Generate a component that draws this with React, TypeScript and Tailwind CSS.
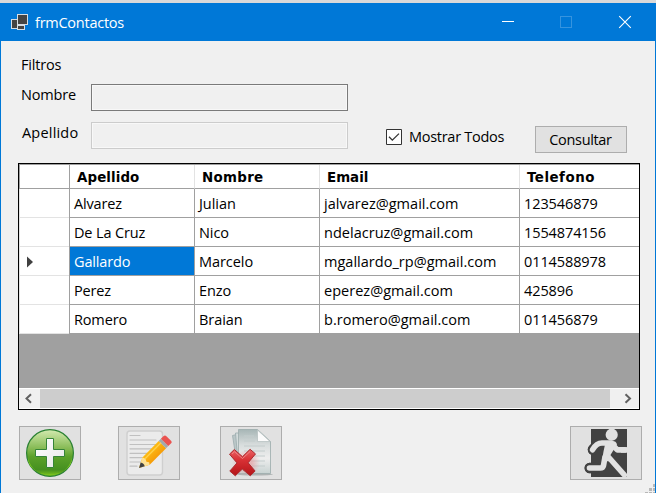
import React from "react";

const rows = [
  ["Alvarez", "Julian", "jalvarez@gmail.com", "123546879"],
  ["De La Cruz", "Nico", "ndelacruz@gmail.com", "1554874156"],
  ["Gallardo", "Marcelo", "mgallardo_rp@gmail.com", "0114588978"],
  ["Perez", "Enzo", "eperez@gmail.com", "425896"],
  ["Romero", "Braian", "b.romero@gmail.com", "011456879"],
];
const headers = ["Apellido", "Nombre", "Email", "Telefono"];
const columns = "grid grid-cols-[50px_125px_125px_200px_120px]";
const tracking = ["tracking-[-0.15px]", "tracking-[-0.05px]", "tracking-[0.02px]", "tracking-[-0.1px]"];
const headerTracking = ["tracking-[0.1px]", "tracking-[0.3px]", "tracking-[0px]", "tracking-[0.5px]"];

function TitleBar() {
  return (
    <header className="flex h-[38px] shrink-0 items-center bg-[#0078d7] pl-[11px] text-white">
      <svg width="18" height="17" viewBox="0 0 18 17">
        <rect x="0.5" y="5.5" width="7" height="9" fill="#444" stroke="#d5dde4" />
        <rect x="6.5" y="0.5" width="10" height="10" fill="#444" stroke="#d5dde4" />
        <rect x="6.5" y="11.5" width="7" height="4" fill="#444" stroke="#d5dde4" />
      </svg>
      <h1 className="ml-[6px] mt-[1px] flex-1 text-[14.5px] leading-5 tracking-[-0.25px]">frmContactos</h1>
      <svg width="156" height="38" viewBox="0 0 156 38" fill="none">
        <path d="M2 18.5h12" stroke="#fff" />
        <rect x="60.5" y="13.5" width="11" height="11" stroke="#3694df" />
        <path d="M119.2 13.2l11.6 11.6M130.8 13.2l-11.6 11.6" stroke="#fff" strokeWidth="1.1" />
      </svg>
    </header>
  );
}

function AddIcon() {
  return (
    <svg width="60" height="52" viewBox="0 0 60 52">
      <defs>
        <linearGradient id="add" x1="0" y1="0" x2="0" y2="1">
          <stop offset="0" stopColor="#d3eaaf" />
          <stop offset=".42" stopColor="#82b850" />
          <stop offset=".58" stopColor="#5ba129" />
          <stop offset=".86" stopColor="#459020" />
          <stop offset="1" stopColor="#82cb1c" />
        </linearGradient>
        <linearGradient id="plus" x1="0" y1="0" x2="1" y2="1">
          <stop offset="0" stopColor="#fff" />
          <stop offset="1" stopColor="#e6e6e6" />
        </linearGradient>
      </defs>
      <circle cx="30" cy="26" r="23.4" fill="url(#add)" stroke="#2b8134" strokeWidth="1.2" />
      <path d="M8 31C11 43 20 48 30 48s19-5 22-17c0 10-10 16.5-22 16.5S8 41 8 31z" fill="#81c91e" />
      <path d="M26.5 11.5h7v11h11v7h-11v11h-7v-11h-11v-7h11z" fill="url(#plus)" stroke="#358437" />
    </svg>
  );
}

function EditIcon() {
  return (
    <svg width="60" height="52" viewBox="0 0 60 52">
      <defs>
        <linearGradient id="pencil" x1="0" y1="0" x2="1" y2="1">
          <stop offset=".3" stopColor="#ffc216" />
          <stop offset=".65" stopColor="#f59b08" />
        </linearGradient>
      </defs>
      <rect x="8" y="4" width="35.5" height="44" rx="3" fill="#ebebeb" stroke="#cfcfcf" strokeWidth="1.4" />
      <path d="M11 8.5h10M11 13h26M11 17.5h28M11 21.8h28M11 26.3h26M11 30.7h22M11 35h17M11 39.2h7" stroke="#c0c0c0" strokeWidth="1.2" strokeLinecap="round" />
      <path d="M20 41l3.4-10.6L39.7 14l7.4 7.3-16.4 16.5z" fill="url(#pencil)" />
      <path d="M20 41l3.4-10.6 3 1.2 1 3.2 2.7.5.6 2.5z" fill="#ffe294" />
      <path d="M20 41l1.7-5.4c2 .2 3.5 1.7 4 3.7z" fill="#424242" />
      <path d="M39.7 14l2.2-2.2 7.4 7.3-2.2 2.2z" fill="#a2a9ac" />
      <path d="M41.9 11.8l2.5-2.5c1-1 2-1 3-.1l4.6 4.5c1 .9.9 2-.1 2.9l-2.6 2.5z" fill="#ea5350" />
      <path d="M25.8 32L42 15.8" stroke="#ffd14b" strokeWidth="1.3" />
    </svg>
  );
}

function DeleteIcon() {
  return (
    <svg width="60" height="52" viewBox="0 0 60 52">
      <defs>
        <linearGradient id="sheet" x1="0" y1="0" x2="0" y2="1">
          <stop offset="0" stopColor="#a7b6b6" />
          <stop offset=".35" stopColor="#d8dddd" />
          <stop offset=".65" stopColor="#eee" />
          <stop offset="1" stopColor="#c8d3d2" />
        </linearGradient>
        <linearGradient id="remove" x1="0" y1="0" x2="0" y2="1">
          <stop offset="0" stopColor="#e96365" />
          <stop offset=".4" stopColor="#d93135" />
          <stop offset="1" stopColor="#b31418" />
        </linearGradient>
        <radialGradient id="glow">
          <stop offset=".4" stopColor="#e69b9d" />
          <stop offset="1" stopColor="#e69b9d" stopOpacity="0" />
        </radialGradient>
      </defs>
      <ellipse cx="34" cy="47.3" rx="18" ry="1.2" fill="#aeb3b3" />
      <path d="M11.5 8.5l4-1 2 20h-3z" fill="#bbc7c8" stroke="#9aabad" strokeWidth=".8" />
      <path d="M14.5 6h4v23h-2z" fill="#d4dcdc" stroke="#9aabad" strokeWidth=".8" />
      <path d="M17.5 2.5h19l13 12v32h-32z" fill="url(#sheet)" stroke="#9babab" strokeWidth=".8" />
      <path d="M36.5 3v11.5H49z" fill="#fbfbfb" stroke="#b8c1c1" strokeWidth=".8" />
      <path d="M23 9h10M23 14h11M23 19h21M23 24h21M28 29h16M30 34h14M31 39h13" stroke="#c3cccc" />
      <ellipse cx="25" cy="36" rx="14" ry="13" fill="url(#glow)" opacity=".65" />
      <path d="M8.5 27.2L13.3 22.5l8.2 7.2 7.6-7.4 5.4 4.6-7.4 8.9 7 8.2-4.8 4.8-8-6.7-7 6.7-5.500-4.700L16 35.9z" fill="url(#remove)" stroke="#a92c30" strokeLinejoin="round" />
      <path d="M11 27l2.5-2.3 8 6.8 7.5-7" fill="none" stroke="#f19092" strokeWidth=".8" />
    </svg>
  );
}

function ExitIcon() {
  return (
    <svg width="70" height="52" viewBox="0 0 70 52">
      <path d="M20 2h36v48H20z" fill="#424242" />
      <path d="M22 22.5L26 18M18.8 41H24" stroke="#424242" strokeWidth="10.5" strokeLinecap="round" />
      <path d="M14.5 27.8h5.5v7.2h-5.5z" fill="#e1e1e1" />
      <circle cx="18.8" cy="41" r="5.25" fill="#424242" />
      <circle cx="22" cy="22.7" r="5.25" fill="#424242" />
      <circle cx="40.7" cy="7.7" r="6.1" fill="#e1e1e1" />
      <g fill="none" stroke="#e1e1e1" strokeWidth="5.6" strokeLinecap="round" strokeLinejoin="round">
        <path d="M21.6 22.7C24 18.5 27 16 31 16h9" />
        <path d="M41 17.5l5.5 5.4H53.5" />
        <path d="M34 30l-1.500 8.500c-.5 2-1.500 2.500-3 2.500H18.500" />
        <path d="M37 29.5L53.4 48" />
      </g>
      <path d="M33 14h8c3 0 4.5 1 5 3.5l-7.5 12-1 5-6.3-2 1.3-8 1.5-7z" fill="#e1e1e1" />
      <path d="M50 20.1h6v5.6h-6z" fill="#e1e1e1" />
    </svg>
  );
}

function IconButton({ label, className, children }: { label: string; className: string; children: React.ReactNode }) {
  return (
    <button aria-label={label} className={`h-[54px] shrink-0 border border-[#adadad] bg-[#e1e1e1] ${className}`}>
      {children}
    </button>
  );
}

function ContactsGrid() {
  return (
    <section className="ml-[17px] mt-[10px] flex h-[247px] w-[622px] shrink-0 flex-col border border-black bg-[#a0a0a0] text-[14.5px] leading-5">
      <div className={`${columns} h-[25px] shrink-0 border-t border-[#a0a0a0]`}>
        <div className="h-6 border-b border-l border-b-[#a0a0a0] border-l-[#a0a0a0] bg-white" />
        {headers.map((h, i) => (
          <div key={h} className={`flex h-6 items-center border-b border-b-[#a0a0a0] border-l bg-white pl-[7px] pt-[2px] font-['DejaVu_Sans',sans-serif] text-[13.4px] font-bold ${headerTracking[i]} ${i === 0 ? "border-l-[#a0a0a0]" : "border-l-[#e3e3e3]"}`}>
            {h}
          </div>
        ))}
      </div>
      {rows.map((row, i) => (
        <div key={row[0]} className={`${columns} h-[29px] shrink-0`}>
          <div className="flex items-center border-b border-l border-b-[#e3e3e3] border-l-[#e3e3e3] bg-white pl-[6px]">
            {i === 2 && (
              <svg width="8" height="12" viewBox="0 0 8 12" className="mt-[2px]">
                <path d="M1 .5L7 6 1 11.5z" fill="#404040" />
              </svg>
            )}
          </div>
          {row.map((value, j) => (
            <div key={j} className={`flex items-center whitespace-nowrap border-b border-l border-[#a0a0a0] pl-1 pt-[1px] ${tracking[j]} ${i === 2 && j === 0 ? "bg-[#0078d7] text-white" : "bg-white"}`}>
              {value}
            </div>
          ))}
        </div>
      ))}
      <div className="mt-auto flex h-[21px] shrink-0 border-y border-white bg-[#f0f0f0]">
        <svg width="21" height="19" viewBox="0 0 21 19" fill="none" stroke="#606060" strokeWidth="2">
          <path d="M12 5.2L7.5 9.5l4.5 4.3" />
        </svg>
        <div className="w-[570px] bg-[#cdcdcd]" />
        <svg width="29" height="19" viewBox="0 0 29 19" fill="none" stroke="#606060" strokeWidth="2">
          <path d="M15.5 5.2l4.5 4.3-4.5 4.3" />
        </svg>
      </div>
    </section>
  );
}

export default function App() {
  return (
    <main className="flex h-[493px] w-[656px] flex-col overflow-hidden bg-[#d9d9d9] pt-[3px] font-['Open_Sans','Noto_Sans',sans-serif] text-[14.5px] leading-5 text-black">
      <TitleBar />
      <div className="relative flex flex-1 flex-col border-x border-[#0078d7] bg-[#f0f0f0]">
        <div className="ml-5 mt-[14px] h-5 tracking-[-0.2px]">Filtros</div>
        <div className="mt-[9px] flex h-[27px] items-start pl-5">
          <label htmlFor="nombre" className="w-[70px] pt-[1px] tracking-[-0.15px]">Nombre</label>
          <input id="nombre" className="h-[27px] w-[257px] border border-[#7a7a7a] bg-[#f0f0f0] shadow-[inset_0_0_0_1px_#f8f8f8]" />
        </div>
        <div className="mt-[11px] flex h-[31px] items-start pl-[21px]">
          <label htmlFor="apellido" className="w-[69px] pt-[1px] tracking-[0.2px]">Apellido</label>
          <input id="apellido" disabled className="h-[27px] w-[257px] border border-[#cccccc] bg-[#f0f0f0] shadow-[inset_0_0_0_1px_#f8f8f8]" />
          <label className="ml-[38px] flex w-[149px] items-center pt-[5px] tracking-[-0.28px]">
            <svg width="16" height="16" viewBox="0 0 16 16" className="mr-[7px]">
              <path d="M.5.5h15v15H.5z" fill="#fff" stroke="#333" />
              <path d="M3 7.8l3.3 3.3L13 4.6" fill="none" stroke="#333" strokeWidth="1.3" />
            </svg>
            Mostrar Todos
          </label>
          <button className="mt-1 h-[27px] w-[92px] border border-[#adadad] bg-[#e1e1e1] pr-[1px] tracking-[-0.33px]">Consultar</button>
        </div>
        <ContactsGrid />
        <footer className="mt-4 flex pl-[18px]">
          <IconButton label="Agregar" className="w-[62px]"><AddIcon /></IconButton>
          <IconButton label="Editar" className="ml-[37px] w-[62px]"><EditIcon /></IconButton>
          <IconButton label="Eliminar" className="ml-10 w-[62px]"><DeleteIcon /></IconButton>
          <IconButton label="Salir" className="ml-[288px] w-[72px]"><ExitIcon /></IconButton>
        </footer>
        <svg width="11" height="10" viewBox="0 0 11 10" className="absolute bottom-0 right-0" fill="#b8b8b8">
          <path d="M9 1h2v3H9zM5 5h3v3H5zM9 5h2v3H9zM1 9h3v1H1zM5 9h3v1H5zM9 9h2v1H9z" />
        </svg>
      </div>
    </main>
  );
}
